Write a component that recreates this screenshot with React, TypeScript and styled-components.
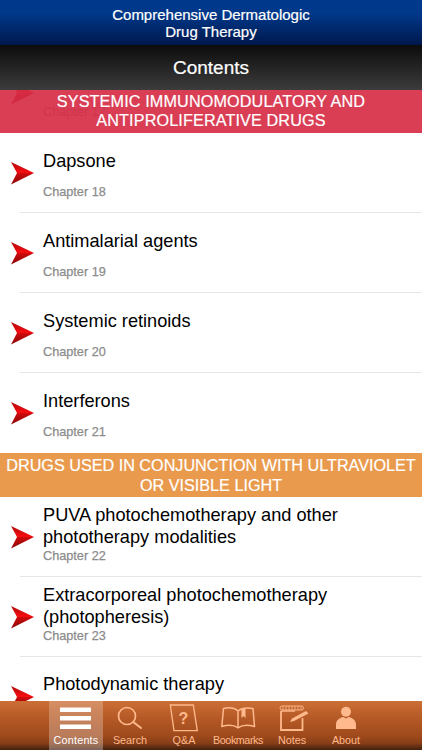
import styled, { createGlobalStyle } from "styled-components"

const Global = createGlobalStyle`
  html, body {
    margin: 0;
    padding: 0;
    background: #fff;
  }
  * {
    box-sizing: border-box;
  }
`

const Page = styled.div`
  width: 422px;
  height: 750px;
  display: flex;
  flex-direction: column;
  overflow: hidden;
  font-family: "Liberation Sans", Arial, sans-serif;
`
const BookHeader = styled.header`
  height: 45px;
  flex: none;
  display: flex;
  align-items: center;
  justify-content: center;
  text-align: center;
  padding-top: 1px;
  color: #fff;
  font-size: 15px;
  line-height: 17px;
  -webkit-text-stroke: 0.2px #fff;
  background: linear-gradient(#003a8c 0%, #00388a 30%, #00184c 100%);
`
const TitleBar = styled.div`
  height: 45px;
  flex: none;
  display: flex;
  align-items: center;
  justify-content: center;
  color: #fff;
  font-size: 19px;
  -webkit-text-stroke: 0.2px #fff;
  background: linear-gradient(#0c0c0c, #3c3c3c);
  position: relative;
  z-index: 2;
`
const Scroller = styled.main`
  flex: 1;
  min-height: 0;
  position: relative;
  overflow: hidden;
  background: #fff;
`
const List = styled.div`
  margin-top: -37px;
`
const Section = styled.div<{ $bg: string; $pinned?: boolean }>`
  height: ${(p) => (p.$pinned ? "42.5px" : "43.2px")};
  display: flex;
  align-items: center;
  justify-content: center;
  text-align: center;
  padding-top: ${(p) => (p.$pinned ? "0" : "2px")};
  color: #fff;
  font-size: 16.2px;
  line-height: 19.6px;
  letter-spacing: ${(p) => (p.$pinned ? "0.13px" : "0")};
  -webkit-text-stroke: 0.2px #fff;
  background: ${(p) => p.$bg};
  ${(p) => p.$pinned && "position: absolute; top: 0; left: 0; right: 0; z-index: 1;"}
`
const Row = styled.div<{ $last?: boolean }>`
  height: 80.1px;
  display: flex;
  position: relative;
  padding-left: 11px;
  &::after {
    content: "";
    display: ${(p) => (p.$last ? "none" : "block")};
    position: absolute;
    left: 20px;
    right: 0;
    bottom: 0;
    height: 1px;
    background: #e6e6e6;
  }
`
const ArrowSlot = styled.div`
  width: 32px;
  flex: none;
  padding-top: 28px;
`
const RowText = styled.div<{ $lines: number }>`
  flex: 1;
  min-width: 0;
  display: flex;
  flex-direction: column;
  padding-top: ${(p) => (p.$lines > 1 ? "7px" : "16.6px")};
  gap: ${(p) => (p.$lines > 1 ? "1px" : "13px")};
`
const RowTitle = styled.div`
  color: #000;
  font-size: 18.2px;
  line-height: 22px;
  min-height: 22px;
`
const Chapter = styled.div`
  color: #8c8c8c;
  font-size: 12.7px;
  line-height: 14px;
  -webkit-text-stroke: 0.25px #8c8c8c;
`
const TabBar = styled.nav`
  height: 49px;
  flex: none;
  display: flex;
  justify-content: center;
  background: linear-gradient(#cc6f36 0%, #b85c28 30%, #a04a1c 70%, #873e17 86%, #41200e 100%);
  position: relative;
  z-index: 2;
`
const Tab = styled.div<{ $active?: boolean }>`
  width: 54px;
  display: flex;
  flex-direction: column;
  align-items: center;
  padding-top: 2px;
  color: ${(p) => (p.$active ? "#fff" : "#ffb98c")};
  background: ${(p) =>
    p.$active ? "linear-gradient(rgba(255,255,255,0.22), rgba(255,255,255,0.3))" : "none"};
  svg {
    display: block;
    flex: none;
  }
`
const TabLabel = styled.span<{ $tight?: boolean; $wide?: boolean }>`
  font-size: 10.8px;
  line-height: 13px;
  margin-top: 1px;
  white-space: nowrap;
  letter-spacing: ${(p) => (p.$tight ? "-0.45px" : p.$wide ? "0.2px" : "0")};
`

function RedArrow() {
  return (
    <svg width="23" height="24" viewBox="0 0 23 24">
      <defs>
        <linearGradient id="arrowTop" x1="0" y1="0" x2="0" y2="1">
          <stop offset="0" stopColor="#b00a0a" />
          <stop offset="1" stopColor="#fa0d10" />
        </linearGradient>
        <linearGradient id="arrowBottom" x1="0" y1="0" x2="0" y2="1">
          <stop offset="0" stopColor="#d00a0c" />
          <stop offset="1" stopColor="#8c0808" />
        </linearGradient>
      </defs>
      <polygon points="0,1 23,12 6,12" fill="url(#arrowTop)" />
      <polygon points="6,12 23,12 0,23.5" fill="url(#arrowBottom)" />
    </svg>
  )
}

const Icons: Record<string, React.ReactNode> = {
  menu: (
    <>
      <rect x="11" y="4.5" width="31" height="4.5" fill="currentColor" />
      <rect x="11" y="13" width="31" height="4.5" fill="currentColor" />
      <rect x="11" y="21.5" width="31" height="4.5" fill="currentColor" />
    </>
  ),
  search: (
    <g fill="none" stroke="currentColor" strokeWidth="1.7">
      <circle cx="24" cy="13" r="8.5" />
      <path d="M30.2 19 L38 25" strokeWidth="2" strokeLinecap="round" />
    </g>
  ),
  qa: (
    <>
      <path d="M13.3 2 H36.3 L40.3 27.7 H17 Z" fill="none" stroke="currentColor" strokeWidth="1.3" />
      <text x="26.5" y="20.5" textAnchor="middle" fontSize="16" fontWeight="700" fill="currentColor">
        ?
      </text>
    </>
  ),
  book: (
    <>
      <path
        d="M27 8 C23 4.5 17 4.5 12.5 5.5 L10.8 23.5 C16 22 23 22 27 24.8 C31 22 38 22 43.5 23.5 L42 5.5 C37 4.5 31 4.5 27 8 Z M27 8 V24.8"
        fill="none"
        stroke="currentColor"
        strokeWidth="1.5"
        strokeLinejoin="round"
      />
      <path d="M30.5 5.5 H34.5 V15 L32.5 13 L30.5 15 Z" fill="currentColor" />
    </>
  ),
  notes: (
    <>
      <path d="M16 8 V27 H37.5 V15" fill="none" stroke="currentColor" strokeWidth="1.8" />
      <path d="M16 8 H30" fill="none" stroke="currentColor" strokeWidth="1.4" />
      <rect x="15" y="3" width="23.5" height="4" rx="2" fill="none" stroke="currentColor" strokeWidth="0.9" />
      <path d="M18 3 V7 M21 3 V7 M24 3 V7 M27 3 V7 M30 3 V7 M33 3 V7 M36 3 V7" stroke="currentColor" strokeWidth="0.8" />
      <path d="M25 19 L27 15.5 L41 8 L43.5 10.5 L29 18 Z" fill="currentColor" />
    </>
  ),
  person: (
    <>
      <circle cx="27" cy="8.7" r="5" fill="currentColor" />
      <path d="M17 26 V21.5 C17 17 21 14.5 24.5 14 L27 15.5 L29.5 14 C33 14.5 37 17 37 21.5 V26 Z" fill="currentColor" />
    </>
  ),
}

const tabs = [
  { label: "Contents", icon: "menu", active: true, wide: true },
  { label: "Search", icon: "search" },
  { label: "Q&A", icon: "qa" },
  { label: "Bookmarks", icon: "book", tight: true },
  { label: "Notes", icon: "notes" },
  { label: "About", icon: "person" },
]

type Item =
  | { kind: "section"; title: string; second: string; bg: string }
  | { kind: "row"; title: string[]; chapter: number; last?: boolean }

const items: Item[] = [
  // title of this one is scrolled away under the title bar
  { kind: "row", title: [], chapter: 17, last: true },
  { kind: "row", title: ["Dapsone"], chapter: 18 },
  { kind: "row", title: ["Antimalarial agents"], chapter: 19 },
  { kind: "row", title: ["Systemic retinoids"], chapter: 20 },
  { kind: "row", title: ["Interferons"], chapter: 21, last: true },
  {
    kind: "section",
    title: "DRUGS USED IN CONJUNCTION WITH ULTRAVIOLET",
    second: "OR VISIBLE LIGHT",
    bg: "#e99a4c",
  },
  {
    kind: "row",
    title: ["PUVA photochemotherapy and other", "phototherapy modalities"],
    chapter: 22,
  },
  {
    kind: "row",
    title: ["Extracorporeal photochemotherapy", "(photopheresis)"],
    chapter: 23,
  },
  { kind: "row", title: ["Photodynamic therapy"], chapter: 24 },
]

export default function App() {
  return (
    <Page>
      <Global />
      <BookHeader>
        <div>
          Comprehensive Dermatologic
          <br />
          Drug Therapy
        </div>
      </BookHeader>
      <TitleBar>Contents</TitleBar>
      <Scroller>
        <Section $pinned $bg="rgba(214, 46, 70, 0.92)">
          <div>
            SYSTEMIC IMMUNOMODULATORY AND
            <br />
            ANTIPROLIFERATIVE DRUGS
          </div>
        </Section>
        <List>
          {items.map((item) =>
            item.kind === "section" ? (
              <Section key={item.title} $bg={item.bg}>
                <div>
                  {item.title}
                  <br />
                  {item.second}
                </div>
              </Section>
            ) : (
              <Row key={item.chapter} $last={item.last}>
                <ArrowSlot>
                  <RedArrow />
                </ArrowSlot>
                <RowText $lines={item.title.length}>
                  <RowTitle>
                    {item.title.map((line) => (
                      <div key={line}>{line}</div>
                    ))}
                  </RowTitle>
                  <Chapter>Chapter {item.chapter}</Chapter>
                </RowText>
              </Row>
            )
          )}
        </List>
      </Scroller>
      <TabBar>
        {tabs.map((tab) => (
          <Tab key={tab.label} $active={tab.active}>
            <svg width="54" height="30" viewBox="0 0 54 30">
              {Icons[tab.icon]}
            </svg>
            <TabLabel $tight={tab.tight} $wide={tab.wide}>
              {tab.label}
            </TabLabel>
          </Tab>
        ))}
      </TabBar>
    </Page>
  )
}
